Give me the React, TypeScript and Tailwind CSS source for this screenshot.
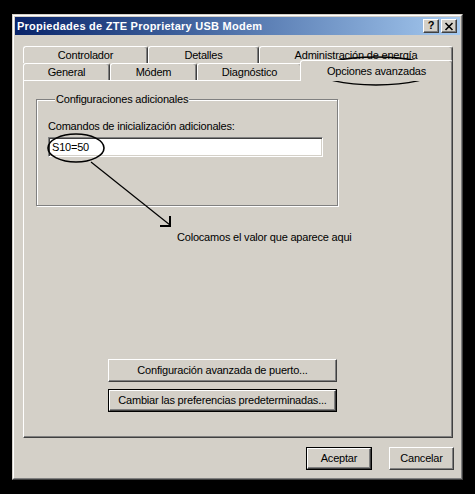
import React from "react";

const raised =
  "border border-t-white border-l-white border-r-[#404040] border-b-[#404040] shadow-[inset_-1px_-1px_0_#808080]";

function Tab({ label, w, selected }: { label: string; w: string; selected?: boolean }) {
  if (selected) {
    return (
      <div
        className={`${w} -ml-[2px] -mt-[3px] h-[21px] relative z-10 bg-[#d4d0c8] border-t border-l border-white border-r border-r-[#404040] rounded-t-[3px] shadow-[inset_-1px_0_0_#808080] flex items-start justify-center pt-[4px] leading-[13px]`}
      >
        {label}
      </div>
    );
  }
  return (
    <div
      className={`${w} h-[17px] shrink-0 bg-[#d4d0c8] border-t border-l border-white border-r border-r-[#404040] rounded-t-[3px] shadow-[inset_-1px_0_0_#808080] flex items-start justify-center pt-[2px] leading-[13px]`}
    >
      {label}
    </div>
  );
}

function Btn({ label, w, def }: { label: string; w: string; def?: boolean }) {
  if (def) {
    return (
      <div className={`${w} h-[23px] border border-black`}>
        <div className={`h-full ${raised} flex items-center justify-center leading-[13px]`}>{label}</div>
      </div>
    );
  }
  return (
    <div className={`${w} h-[23px] ${raised} flex items-center justify-center leading-[13px]`}>{label}</div>
  );
}

export default function App() {
  return (
    <div className="relative w-[475px] h-[494px] bg-black overflow-hidden pt-[14px] pl-[12px] font-['Liberation_Sans',Arial,sans-serif] text-[11px] tracking-[-0.2px] text-black">
      <div className="w-[451px] h-[466px] bg-[#d4d0c8] border border-t-[#d4d0c8] border-l-[#d4d0c8] border-r-[#404040] border-b-[#404040]">
        <div className="h-full border border-t-white border-l-white border-r-[#808080] border-b-[#808080] p-px flex flex-col">
          {/* Title bar */}
          <div className="h-[18px] shrink-0 flex items-center bg-linear-to-r from-[#0a246a] to-[#a6caf0] pl-[2px] pr-[3px]">
            <span className="font-bold text-white text-[11px] leading-[13px] tracking-[0.25px]">
              Propiedades de ZTE Proprietary USB Modem
            </span>
            <div className="ml-auto flex gap-[2px]">
              <div className={`w-[16px] h-[14px] bg-[#d4d0c8] ${raised} flex items-center justify-center font-bold text-[11px] leading-[11px] pb-px tracking-normal`}>
                ?
              </div>
              <div className={`w-[16px] h-[14px] bg-[#d4d0c8] ${raised} flex items-center justify-center`}>
                <svg width="10" height="9" viewBox="0 0 10 9">
                  <path d="M1.5 1 L8.5 8 M8.5 1 L1.5 8" stroke="#000" strokeWidth="1.6" />
                </svg>
              </div>
            </div>
          </div>

          {/* Body */}
          <div className="flex-1 flex flex-col pl-[8px] pr-[7px] pt-[11px]">
            {/* Tabs */}
            <div className="flex flex-col w-[430px]">
              <div className="flex h-[17px]">
                <Tab label="Controlador" w="w-[125px]" />
                <Tab label="Detalles" w="w-[111px]" />
                <Tab label="Administración de energía" w="w-[194px]" />
              </div>
              <div className="flex h-[17px]">
                <Tab label="General" w="w-[87px]" />
                <Tab label="Módem" w="w-[87px]" />
                <Tab label="Diagnóstico" w="w-[105px]" />
                <Tab label="Opciones avanzadas" w="w-[153px]" selected />
              </div>
            </div>

            {/* Panel */}
            <div className="w-[430px] h-[358px] border border-t-white border-l-white border-r-[#404040] border-b-[#404040] shadow-[inset_-1px_-1px_0_#808080] pl-[12px] pt-[12px] flex flex-col">
              <fieldset className="w-[301px] h-[113px] border border-[#808080] shadow-[inset_1px_1px_0_white,1px_1px_0_white] pl-[11px] pr-[14px]">
                <legend className="ml-[7px] px-[1px] bg-[#d4d0c8] leading-[13px]">Configuraciones adicionales</legend>
                <div className="mt-[14px] leading-[13px]">Comandos de inicialización adicionales:</div>
                <div className="mt-[4px] h-[20px] w-[275px] bg-white border border-t-[#808080] border-l-[#808080] border-r-white border-b-white shadow-[inset_1px_1px_0_#404040,inset_-1px_-1px_0_#d4d0c8] pl-[3px] flex items-center leading-[13px]">
                  S10=50
                </div>
              </fieldset>

              <div className="ml-[141px] mt-[25px] leading-[13px]">Colocamos el valor que aparece aqui</div>

              <div className="ml-[72px] mt-[115px] flex flex-col gap-[7px]">
                <Btn label="Configuración avanzada de puerto..." w="w-[229px]" />
                <Btn label="Cambiar las preferencias predeterminadas..." w="w-[229px]" def />
              </div>
            </div>

            {/* Bottom buttons */}
            <div className="mt-[9px] flex w-[431px] justify-end gap-[17px]">
              <Btn label="Aceptar" w="w-[66px]" def />
              <Btn label="Cancelar" w="w-[65px]" />
            </div>
          </div>
        </div>
      </div>

      {/* Annotations drawn over the dialog */}
      <svg className="absolute inset-0 pointer-events-none" width="475" height="494" viewBox="0 0 475 494">
        <ellipse cx="76" cy="148" rx="28" ry="14" fill="none" stroke="#000" strokeWidth="1.6" />
        <ellipse cx="376" cy="71" rx="59" ry="14" fill="none" stroke="#000" strokeWidth="1.4" />
        <line x1="91" y1="162" x2="170" y2="225" stroke="#000" strokeWidth="1.2" />
        <path d="M170 216 L170 226 L160 226" fill="none" stroke="#000" strokeWidth="2" />
      </svg>
    </div>
  );
}
